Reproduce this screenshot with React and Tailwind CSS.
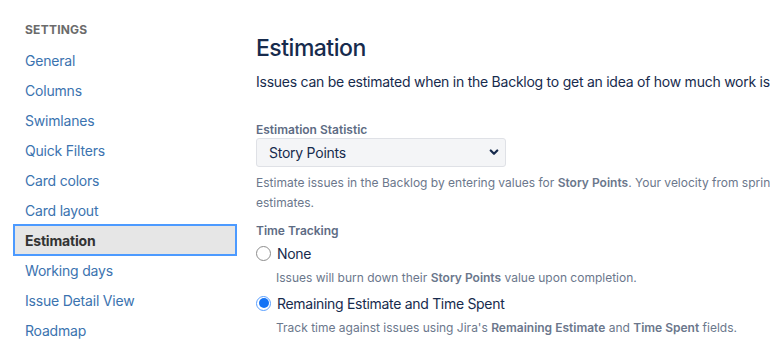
import React from 'react'

const navItems = [
  'General',
  'Columns',
  'Swimlanes',
  'Quick Filters',
  'Card colors',
  'Card layout',
  'Estimation',
  'Working days',
  'Issue Detail View',
  'Roadmap',
]

const font = { fontFamily: 'Inter, "Liberation Sans", sans-serif' }

function Radio({ checked }) {
  if (checked) {
    return (
      <span className="flex h-[15px] w-[15px] flex-none items-center justify-center rounded-full border border-[#5aa0ff] bg-white">
        <span className="h-[10px] w-[10px] rounded-full bg-[#1473f5]" />
      </span>
    )
  }
  return <span className="h-[15px] w-[15px] flex-none rounded-full border border-[#8d8d8d] bg-white" />
}

function Sidebar() {
  return (
    <div className="w-[256px] flex-none pl-[13px] pr-[19px] pt-[21px]">
      <div className="h-[18px] pl-[12px] text-[12px] font-bold leading-[18px] tracking-[0.02em] text-[#6b6b6b]">
        SETTINGS
      </div>
      <ul className="mt-[6px] tracking-[-0.2px]">
        {navItems.map((item) =>
          item === 'Estimation' ? (
            <li
              key={item}
              className="flex h-[32px] -my-px items-center border-2 border-[#4c9aff] bg-[#e6e6e6] px-[10px] text-[14px] font-bold text-[#333333]"
            >
              {item}
            </li>
          ) : (
            <li key={item} className="flex h-[30px] items-center px-[12px] text-[14px] text-[#3b73af]">
              {item}
            </li>
          )
        )}
      </ul>
    </div>
  )
}

function Main() {
  return (
    <div className="min-w-0 flex-1 pt-[34px] text-[#172b4d]">
      <h1 className="text-[23px] font-medium leading-[28px] tracking-[-0.5px]">Estimation</h1>
      <p className="mt-[10px] whitespace-nowrap text-[14px] leading-[20px] tracking-[-0.25px]">
        Issues can be estimated when in the Backlog to get an idea of how much work is in a sprint.
      </p>

      <div className="mt-[30px] text-[12px] font-semibold leading-[16px] text-[#5e6c84]">Estimation Statistic</div>
      <div className="flex h-[29px] w-[250px] items-center justify-between rounded-[3px] border border-[#dfe1e6] bg-[#f4f5f7] pl-[12px] pr-[6px] text-[14px] tracking-[-0.25px]">
        <span>Story Points</span>
        <svg width="10" height="7" viewBox="0 0 10 7" fill="none">
          <path d="M1.75 1.5 5 4.75 8.25 1.5" stroke="#172b4d" strokeWidth="2.2" strokeLinecap="round" strokeLinejoin="round" />
        </svg>
      </div>
      <p className="mt-[6px] whitespace-nowrap text-[12px] leading-[20px] text-[#6b778c]">
        Estimate issues in the Backlog by entering values for <b className="font-semibold">Story Points</b>. Your velocity
        from sprint to sprint will be calculated from these
        <br />
        estimates.
      </p>

      <div className="mt-[10px] text-[12px] font-semibold leading-[16px] text-[#5e6c84]">Time Tracking</div>
      <div className="mt-[2px] flex h-[24px] items-center gap-[6px] text-[14px] tracking-[-0.3px]">
        <Radio />
        <span>None</span>
      </div>
      <p className="mt-[3px] pl-[20px] text-[12px] leading-[20px] text-[#6b778c]">
        Issues will burn down their <b className="font-semibold">Story Points</b> value upon completion.
      </p>
      <div className="mt-[3px] flex h-[24px] items-center gap-[6px] text-[14px] tracking-[-0.3px]">
        <Radio checked />
        <span>Remaining Estimate and Time Spent</span>
      </div>
      <p className="mt-[3px] pl-[20px] text-[12px] leading-[20px] text-[#6b778c]">
        Track time against issues using Jira's <b className="font-semibold">Remaining Estimate</b> and{' '}
        <b className="font-semibold">Time Spent</b> fields.
      </p>
    </div>
  )
}

export default function App() {
  return (
    <div className="flex h-[362px] w-[770px] overflow-hidden bg-white" style={font}>
      <Sidebar />
      <Main />
    </div>
  )
}
